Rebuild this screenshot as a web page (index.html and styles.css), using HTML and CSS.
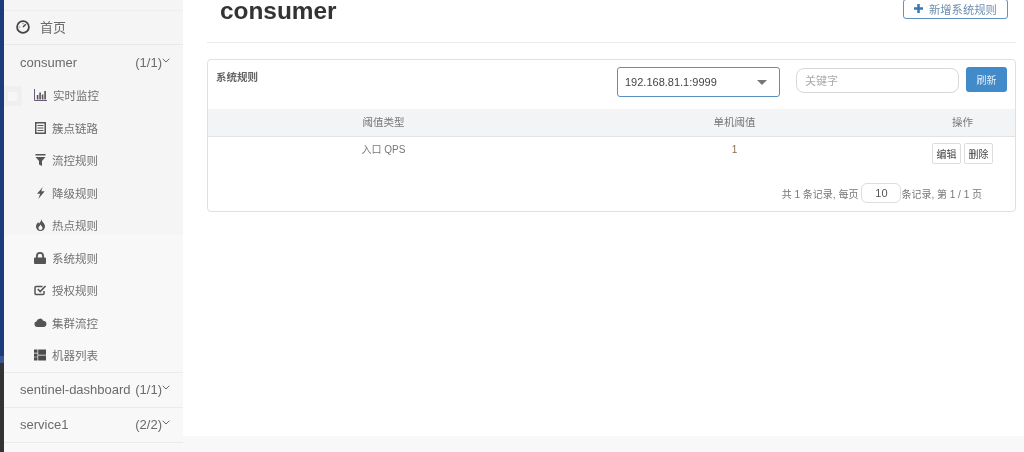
FILE: index.html
```html
<!DOCTYPE html>
<html lang="zh">
<head>
<meta charset="utf-8">
<title>consumer</title>
<link rel="stylesheet" href="styles.css">
</head>
<body>
<div class="app">
  <div class="desk"></div>
  <aside class="sidebar">
    <div class="ghost"><div class="ghost-in"></div></div>
    <a class="home">
      <svg class="home-ico" viewBox="0 0 14 14"><circle cx="7" cy="7" r="5.900" fill="none" stroke="#444" stroke-width="1.800"/><path d="M7 7 9.800 4.200" stroke="#444" stroke-width="1.400" fill="none"/><path d="M3.200 7h1.200M7 3v1.200" stroke="#777" stroke-width="1" fill="none"/></svg>
      <span>首页</span>
    </a>
    <div class="app-row first"><span class="name">consumer</span><span class="count">(1/1)</span><svg class="chev" viewBox="0 0 8 5"><path d="M.7.8 4 4l3.300-3.200" fill="none" stroke="#666" stroke-width="1"/></svg></div>
    <ul class="menu">
      <li><svg class="ico" viewBox="0 0 13 12"><path d="M.5 0v11.500H13" fill="none" stroke="#6b5b7b" stroke-width="1"/><path d="M2.800 6h1.600v4.500H2.800zM5.300 3.500h1.600v7H5.300zM7.800 5.500h1.600v5H7.800zM10.300 2h1.600v8.500h-1.600z" fill="#555"/></svg><span class="lab l1">实时监控</span></li>
      <li><svg class="ico" viewBox="0 0 13 12"><path fill-rule="evenodd" d="M1 0h11v12H1zM2.500 1.500v9h8v-9z" fill="#555"/><path d="M3.500 3.500h6M3.500 6h6M3.500 8.500h6" stroke="#555" stroke-width="1.200"/></svg><span class="lab">簇点链路</span></li>
      <li><svg class="ico" viewBox="0 0 13 12"><path d="M1.500 0h10v1.600h-10zM1.500 3h10L8 7v5L5 10.500V7z" fill="#555"/></svg><span class="lab">流控规则</span></li>
      <li><svg class="ico" viewBox="0 0 13 12"><path d="M8.800 0 3 6.800h3.200L4.300 12l6.400-7.800H7.200z" fill="#555"/></svg><span class="lab">降级规则</span></li>
      <li><svg class="ico" viewBox="0 0 13 12"><path d="M7 0c.6 2-.8 3-2 4.500C4.400 4 4.200 3.300 4.200 3 2.800 4.500 2 6 2 7.500 2 10 4 12 6.500 12S11 10 11 7.500c0-3-3-4.500-4-7.500zM6.500 11c-1.200 0-2-.9-2-2 0-1.300 1.500-2 2-3.500.6 1.500 2 2.300 2 3.500 0 1.100-.8 2-2 2z" fill="#555" fill-rule="evenodd"/></svg><span class="lab">热点规则</span></li>
      <li><svg class="ico" viewBox="0 0 13 12"><path fill-rule="evenodd" d="M1 5.500h1V4a4 4 0 0 1 8 0v1.500h1a1 1 0 0 1 1 1V11a1 1 0 0 1-1 1H1a1 1 0 0 1-1-1V6.500a1 1 0 0 1 1-1zm2.800 0h4.400V4a2.200 2.200 0 0 0-4.400 0z" fill="#555"/></svg><span class="lab">系统规则</span></li>
      <li><svg class="ico" viewBox="0 0 13 12"><path d="M10 7v2.500a1 1 0 0 1-1 1H2a1 1 0 0 1-1-1v-6a1 1 0 0 1 1-1h6.500" fill="none" stroke="#555" stroke-width="1.500"/><path d="m3.800 5 2.400 2.500L11.500 2" fill="none" stroke="#555" stroke-width="1.700"/></svg><span class="lab">授权规则</span></li>
      <li><svg class="ico" viewBox="0 0 13 12"><path d="M3 10A2.900 2.900 0 0 1 2.600 4.300 3.500 3.500 0 0 1 9.200 3.700 3.200 3.200 0 0 1 10 10z" fill="#555"/></svg><span class="lab">集群流控</span></li>
      <li><svg class="ico" viewBox="0 0 13 12"><path d="M0 .5h3.500v3.300H0zM0 4.400h3.500v3.300H0zM0 8.300h3.500v3.300H0zM4.200 .5H12v5.200H4.200zM4.200 6.400H12v5.200H4.200z" fill="#4d4d4d"/></svg><span class="lab">机器列表</span></li>
    </ul>
    <div class="app-row"><span class="name">sentinel-dashboard</span><span class="count">(1/1)</span><svg class="chev" viewBox="0 0 8 5"><path d="M.7.8 4 4l3.300-3.200" fill="none" stroke="#666" stroke-width="1"/></svg></div>
    <div class="app-row"><span class="name">service1</span><span class="count">(2/2)</span><svg class="chev" viewBox="0 0 8 5"><path d="M.7.8 4 4l3.300-3.200" fill="none" stroke="#666" stroke-width="1"/></svg></div>
  </aside>
  <main class="main">
    <header class="head">
      <h1 class="title">consumer</h1>
      <button class="add"><svg class="plus" viewBox="0 0 10 10"><path d="M5 0v10M0 5h10" stroke="#337ab7" stroke-width="2.800"/></svg>新增系统规则</button>
    </header>
    <section class="card">
      <div class="toolbar">
        <div class="card-title">系统规则</div>
        <div class="select"><span>192.168.81.1:9999</span><i class="caret"></i></div>
        <input class="search" placeholder="关键字">
        <button class="refresh">刷新</button>
      </div>
      <div class="row thead"><div class="c1">阈值类型</div><div class="c2">单机阈值</div><div class="c3">操作</div></div>
      <div class="row tbody"><div class="c1">入口 QPS</div><div class="c2 num">1</div><div class="c3 ops"><button class="op">编辑</button><button class="op">删除</button></div></div>
      <div class="pager">共 1 条记录, 每页<input class="size" value="10">条记录, 第 1 / 1 页</div>
    </section>
  </main>
</div>
</body>
</html>
```

FILE: styles.css
```css
* { box-sizing: border-box; }
html, body { margin: 0; height: 100%; overflow: hidden; }
body { font-family: "Liberation Sans", "Noto Sans CJK SC", sans-serif; color: #676a6c; background: #fff; }
.app { display: flex; width: 1024px; height: 452px; background: #f8f8f8; filter: blur(.35px); }
.desk { width: 4px; height: 100%; flex: none; background: linear-gradient(#1c3b7a 0 356px, #3a5590 356px 363px, #333 363px); }
.sidebar { position: relative; width: 179px; height: 452px; flex: none; background: linear-gradient(#f5f5f5 0 235px, #f8f8f8 235px); padding-top: 10px; }
.ghost { position: absolute; left: 0; top: 86px; width: 18px; height: 20px; padding: 6px 5px 5px 4px; background: #efefef; }
.ghost-in { width: 9px; height: 9px; background: #f6f6f6; }
.home { display: flex; align-items: center; height: 35px; padding: 0 0 2px 12px; font-size: 13px; color: #6b6b6b; border-top: 1px solid #eee; border-bottom: 1px solid #e9e9e9; }
.home-ico { width: 14px; height: 14px; margin-right: 10px; }
.home span { margin-top: -1px; }
.app-row { display: flex; align-items: center; height: 35px; padding: 0 13px 0 16px; font-size: 13px; color: #6b6b6b; border-bottom: 1px solid #ebebeb; }
.app-row.first { border-bottom: 0; height: 34px; }
.name { flex: 1; white-space: nowrap; }
.chev { width: 8px; height: 5px; margin: 0 0 4px 0; }
.menu { list-style: none; margin: 0; padding: 0; border-bottom: 1px solid #ebebeb; }
.menu li { display: flex; align-items: center; height: 32.500px; padding-left: 30px; font-size: 11.500px; color: #707070; }
.ico { width: 13px; height: 12px; margin-right: 5px; flex: none; }
.lab.l1 { margin: 0 0 0 1px; }
.main { width: 841px; height: 436px; flex: none; background: #fff; padding: 0 8px 0 24px; }
.head { display: flex; justify-content: space-between; height: 43px; border-bottom: 1px solid #e7eaec; }
.title { margin: 1px 0 0 13px; font-size: 24.400px; line-height: 20px; font-weight: 700; color: #333; }
.add { height: 20px; margin: -1px 8px 0 0; padding: 0 0 1px 10px; width: 105px; display: flex; align-items: center; font: 11.300px "Liberation Sans", "Noto Sans CJK SC", sans-serif; color: #6d8fb0; background: #fff; border: 1px solid #5f93c4; border-radius: 3px; }
.plus { width: 9px; height: 9px; margin-right: 6px; flex: none; }
.card { margin-top: 16px; height: 153px; border: 1px solid #e0e0e0; border-radius: 4px; font-size: 10px; }
.toolbar { display: flex; align-items: flex-start; height: 49px; padding: 7px 8px 0 8px; }
.card-title { width: 401px; margin-top: 2px; font-size: 10.500px; font-weight: 700; color: #666; }
.select { width: 163px; height: 30px; margin-right: 16px; padding: 0 12px 0 7px; display: flex; align-items: center; justify-content: space-between; font-size: 11px; color: #444; border: 1px solid #5b8fc0; border-radius: 3px; }
.caret { width: 0; height: 0; border: 5px solid transparent; border-top-color: #777; border-bottom: 0; }
.search { width: 163px; height: 25px; margin: 1px 7px 0 0; padding: 0 8px; font: 11px "Liberation Sans", "Noto Sans CJK SC", sans-serif; border: 1px solid #d8d8d8; border-radius: 8px; outline: 0; }
.search::placeholder { color: #aaa; }
.refresh { width: 41px; height: 25px; padding: 0; font: 10px "Liberation Sans", "Noto Sans CJK SC", sans-serif; color: #e4eef7; background: #428bca; border: 0; border-radius: 3px; }
.row { display: grid; grid-template-columns: 351px 351px 1fr; text-align: center; line-height: 14px; }
.thead { height: 28px; align-items: center; padding-bottom: 1px; background: #f3f4f6; border-bottom: 1px solid #e3e3e3; color: #777; font-size: 10.500px; }
.tbody { height: 44px; color: #777; }
.tbody .c1, .tbody .c2 { padding-top: 6px; }
.num { color: #8a6d4c; }
.ops { display: flex; justify-content: center; gap: 3px; padding-top: 6px; }
.op { height: 21px; width: 29px; padding: 0; font: 10px "Liberation Sans", "Noto Sans CJK SC", sans-serif; color: #444; background: #fff; border: 1px solid #ddd; border-radius: 2px; }
.pager { display: flex; justify-content: flex-end; align-items: center; padding: 2px 33px 0 0; font-size: 10px; color: #777; }
.size { width: 40px; height: 20px; margin: 0 0 0 3px; text-align: center; font: 11px "Liberation Sans", sans-serif; color: #555; border: 1px solid #ddd; border-radius: 6px; outline: 0; }
```
